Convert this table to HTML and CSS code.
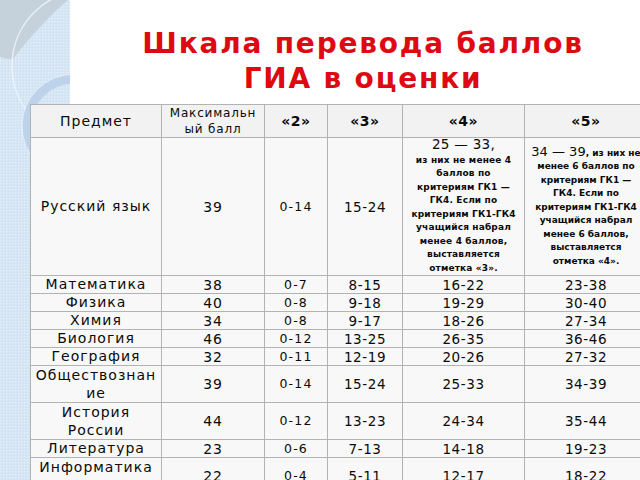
FILE: index.html
```html
<!DOCTYPE html>
<html lang="ru">
<head>
<meta charset="utf-8">
<title>Шкала перевода баллов ГИА в оценки</title>
<link rel="stylesheet" href="styles.css">
</head>
<body>
<div class="deco">
  <svg width="70" height="480" viewBox="0 0 70 480" xmlns="http://www.w3.org/2000/svg">
    <defs>
      <pattern id="tex" width="3" height="3" patternUnits="userSpaceOnUse">
        <rect width="3" height="3" fill="#d7e6f5"/>
        <rect width="1" height="1" fill="#e6f0f9"/>
        <rect x="2" y="2" width="1" height="1" fill="#cadcef"/>
      </pattern>
      <clipPath id="stripclip"><rect width="70" height="480"/></clipPath>
    </defs>
    <g clip-path="url(#stripclip)">
      <rect width="70" height="480" fill="url(#tex)"/>
      <path d="M0 0 L68 0 C52 14 32 34 13 59 C8 59 4 58 0 57 Z" fill="#c2ccd6" opacity="0.85"/>
      <circle cx="88" cy="66" r="76" fill="none" stroke="#f4f8fc" stroke-width="1.5" opacity="0.8"/>
      <circle cx="74" cy="126" r="47" fill="none" stroke="#bdd3ea" stroke-width="9"/>
      <circle cx="74" cy="126" r="52" fill="none" stroke="#e8f1fa" stroke-width="1" opacity="0.7"/>
    </g>
  </svg>
</div>

<header class="title">
  <h1>Шкала перевода баллов<br>ГИА в оценки</h1>
</header>

<main class="wrap">
<table class="scale">
  <thead>
    <tr class="r-head">
      <th class="subj-h w1">Предмет</th>
      <th class="max-h w2">Максимальн<br>ый балл</th>
      <th class="mark w3">«2»</th>
      <th class="mark w4">«3»</th>
      <th class="mark w5">«4»</th>
      <th class="mark w6">«5»</th>
    </tr>
  </thead>
  <tbody>
    <tr class="r-rus">
      <td class="subj">Русский язык</td>
      <td class="max">39</td>
      <td class="two">0-14</td>
      <td class="val">15-24</td>
      <td class="note"><span class="big">25 — 33,</span><br><b>из них не менее 4<br>баллов по<br>критериям ГК1 —<br>ГК4. Если по<br>критериям ГК1-ГК4<br>учащийся набрал<br>менее 4 баллов,<br>выставляется<br>отметка «3».</b></td>
      <td class="note tight"><span class="big">34 — 39</span><b>, из них не<br>менее 6 баллов по<br>критериям ГК1 —<br>ГК4. Если по<br>критериям ГК1-ГК4<br>учащийся набрал<br>менее 6 баллов,<br>выставляется<br>отметка «4».</b></td>
    </tr>
    <tr class="r-1a"><td class="subj">Математика</td><td class="max">38</td><td class="two">0-7</td><td class="val">8-15</td><td class="val">16-22</td><td class="val">23-38</td></tr>
    <tr class="r-1"><td class="subj">Физика</td><td class="max">40</td><td class="two">0-8</td><td class="val">9-18</td><td class="val">19-29</td><td class="val">30-40</td></tr>
    <tr class="r-1"><td class="subj">Химия</td><td class="max">34</td><td class="two">0-8</td><td class="val">9-17</td><td class="val">18-26</td><td class="val">27-34</td></tr>
    <tr class="r-1"><td class="subj">Биология</td><td class="max">46</td><td class="two">0-12</td><td class="val">13-25</td><td class="val">26-35</td><td class="val">36-46</td></tr>
    <tr class="r-1"><td class="subj">География</td><td class="max">32</td><td class="two">0-11</td><td class="val">12-19</td><td class="val">20-26</td><td class="val">27-32</td></tr>
    <tr class="r-2"><td class="subj">Обществознан<br>ие</td><td class="max">39</td><td class="two">0-14</td><td class="val">15-24</td><td class="val">25-33</td><td class="val">34-39</td></tr>
    <tr class="r-2"><td class="subj">История<br>России</td><td class="max">44</td><td class="two">0-12</td><td class="val">13-23</td><td class="val">24-34</td><td class="val">35-44</td></tr>
    <tr class="r-1a"><td class="subj">Литература</td><td class="max">23</td><td class="two">0-6</td><td class="val">7-13</td><td class="val">14-18</td><td class="val">19-23</td></tr>
    <tr class="r-2"><td class="subj">Информатика<br>ИКТ</td><td class="max">22</td><td class="two">0-4</td><td class="val">5-11</td><td class="val">12-17</td><td class="val">18-22</td></tr>
  </tbody>
</table>
</main>
</body>
</html>
```

FILE: styles.css
```css
html, body {
  margin: 0;
  padding: 0;
  background: #ffffff;
}

body {
  width: 640px;
  height: 480px;
  overflow: hidden;
  position: relative;
  font-family: "DejaVu Sans", Verdana, sans-serif;
  color: #0a0a0a;
}

.deco {
  position: absolute;
  left: 0;
  top: 0;
  width: 70px;
  height: 480px;
  z-index: 0;
}

.deco svg {
  display: block;
}

.title {
  position: relative;
  z-index: 1;
  padding: 26px 0 0 86px;
}

.title h1 {
  margin: 0;
  text-align: center;
  font-family: "DejaVu Sans", Verdana, sans-serif;
  font-weight: bold;
  font-size: 28px;
  line-height: 35px;
  letter-spacing: 1.8px;
  color: #de0a12;
}

.wrap {
  position: relative;
  z-index: 1;
  padding: 8px 0 0 30px;
}

.scale {
  border-collapse: collapse;
  table-layout: fixed;
  width: 611px;
}

.w1 { width: 130px; }
.w2 { width: 102px; }
.w3 { width: 62px; }
.w4 { width: 74px; }
.w5 { width: 121px; }
.w6 { width: 122px; }

.scale th,
.scale td {
  border: 1px solid #b3b3b3;
  background: #f8f8f8;
  padding: 0;
  text-align: center;
  vertical-align: middle;
  white-space: nowrap;
}

.scale th {
  background: #f2f2f2;
  font-weight: normal;
}

.r-head { height: 32px; }
.r-rus { height: 134px; }
.r-1 { height: 17px; }
.r-1a { height: 18px; }
.r-2 { height: 36px; }

.subj-h {
  font-size: 14px;
  letter-spacing: 1px;
}

.max-h {
  font-size: 12px;
  line-height: 16px;
  letter-spacing: 0.8px;
}

.scale th.mark {
  font-size: 14px;
  font-weight: bold;
  letter-spacing: 0.5px;
}

.subj {
  font-size: 14px;
  line-height: 17px;
  letter-spacing: 1px;
}

.r-2 .subj {
  line-height: 18px;
}

.max {
  font-size: 14px;
  line-height: 16px;
  letter-spacing: 0.8px;
}

.two {
  font-size: 12.5px;
  line-height: 16px;
  letter-spacing: 1.2px;
}

.val {
  font-size: 13.5px;
  line-height: 16px;
  letter-spacing: 0.6px;
}

.note {
  font-size: 9px;
  line-height: 13.5px;
  letter-spacing: 0.15px;
}

.note .big {
  font-size: 13.5px;
  letter-spacing: 0.3px;
}

.note.tight {
  letter-spacing: 0;
}

.note.tight .big {
  font-size: 13px;
  letter-spacing: 0;
}

.note b {
  font-weight: bold;
}
```
